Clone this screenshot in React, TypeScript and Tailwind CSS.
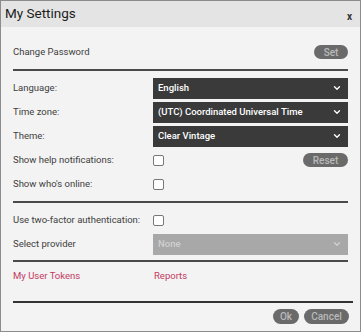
import { ChevronDown } from "lucide-react";

type SelectProps = { value: string; disabled?: boolean };

function FakeSelect({ value, disabled }: SelectProps) {
  return (
    <div
      className={[
        "flex h-[21px] w-[196px] items-center justify-between pl-[5px] pr-[6px] text-[9.5px] font-medium",
        disabled ? "bg-[#a8a8a8] text-[#cfcfcf]" : "bg-[#3a3a3a] text-white",
      ].join(" ")}
    >
      <span>{value}</span>
      <ChevronDown size={10} strokeWidth={3.2} className={disabled ? "text-[#d0d0d0]" : "text-white"} />
    </div>
  );
}

function Pill({ label, className = "" }: { label: string; className?: string }) {
  return (
    <button
      type="button"
      className={`flex h-[14px] items-center justify-center rounded-full bg-[#6a6a6a] text-[10px] font-medium text-[#b9b9b9] ${className}`}
    >
      {label}
    </button>
  );
}

function Check() {
  return <span className="block h-[11px] w-[11px] rounded-[2px] border border-[#777] bg-white" />;
}

function Row({ label, children }: { label: string; children?: React.ReactNode }) {
  return (
    <div className="flex h-[24px] items-center">
      <span className="w-[140px] shrink-0 whitespace-nowrap">{label}</span>
      {children}
    </div>
  );
}

export default function App() {
  return (
    <div
      className="flex h-[332px] w-[361px] flex-col border border-[#8c8c8c] bg-[#f3f3f3] text-[9.5px] text-[#404040]"
      style={{ fontFamily: "Roboto, 'Liberation Sans', sans-serif" }}
    >
      <header className="flex h-[26px] shrink-0 items-center justify-between bg-[#e4e4e4] pl-[4px] pr-[8px]">
        <h1 className="text-[13.5px] leading-none text-[#1c1c1c]">My Settings</h1>
        <span className="mt-[5px] text-[10px] font-bold text-[#333]">x</span>
      </header>

      <div className="flex flex-col px-[12px]">
        <div className="flex h-[44px] items-center justify-between border-b-2 border-[#4a4a4a] pt-[9px]">
          <span>Change Password</span>
          <Pill label="Set" className="-mt-[1px] w-[34px]" />
        </div>

        <div className="flex flex-col border-b-2 border-[#4a4a4a] pt-[5px] pb-[5px]">
          <Row label="Language:">
            <FakeSelect value="English" />
          </Row>
          <Row label="Time zone:">
            <FakeSelect value="(UTC) Coordinated Universal Time" />
          </Row>
          <Row label="Theme:">
            <FakeSelect value="Clear Vintage" />
          </Row>
          <Row label="Show help notifications:">
            <Check />
            <Pill label="Reset" className="ml-auto w-[45px]" />
          </Row>
          <Row label="Show who's online:">
            <Check />
          </Row>
        </div>

        <div className="flex flex-col border-b-2 border-[#4a4a4a] pt-[5px] pb-[4px]">
          <Row label="Use two-factor authentication:">
            <Check />
          </Row>
          <Row label="Select provider">
            <FakeSelect value="None" disabled />
          </Row>
        </div>

        <div className="flex h-[39px] items-start pt-[8px] leading-[12px] text-[#c23a5e]">
          <span className="w-[141px]">My User Tokens</span>
          <span>Reports</span>
        </div>
      </div>

      <footer className="ml-[12px] mr-[7px] flex flex-1 items-start justify-end gap-[5px] border-t-2 border-[#333] pt-[6px] pr-[4px]">
        <Pill label="Ok" className="h-[15px] w-[26px]" />
        <Pill label="Cancel" className="h-[15px] w-[45px]" />
      </footer>
    </div>
  );
}
